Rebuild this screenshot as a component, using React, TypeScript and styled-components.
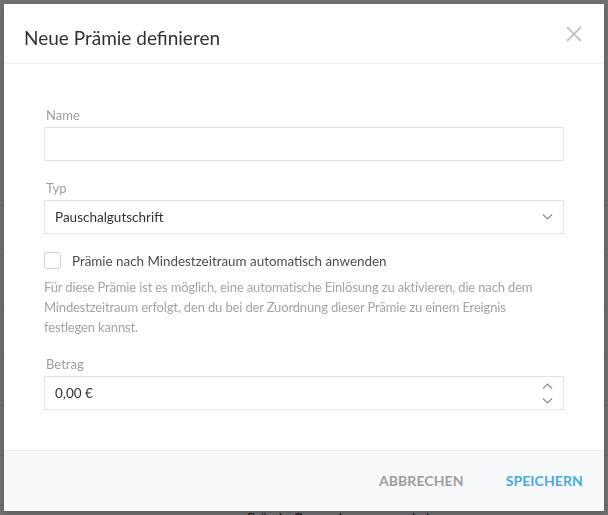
import React from 'react';
import styled, { createGlobalStyle } from 'styled-components';

const GlobalStyle = createGlobalStyle`
  html, body { margin: 0; padding: 0; width: 100%; height: 100%; overflow: hidden; }
  body { font-family: 'Lato', 'Noto Sans', sans-serif; background: #ffffff; color: #333; }
  * { box-sizing: border-box; }
`;

/* ---------- underlying page ---------- */
const Page = styled.div`
  width: 608px;
  height: 515px;
  padding-top: 205px;
  overflow: hidden;
`;

const TableRow = styled.div`
  height: 50px;
  border-top: 1px solid #e6e6e6;
  display: grid;
  grid-template-columns: 247px 165px 1fr;
  align-items: start;
  padding-top: 3px;
  font-size: 14px;
  color: #333;
`;

const Cell = styled.div`
  line-height: 18px;
`;

/* ---------- modal ---------- */
const Overlay = styled.div`
  position: fixed;
  inset: 0;
  background: rgba(8, 9, 14, 0.57);
  display: flex;
  align-items: flex-start;
  justify-content: center;
  padding: 4px;
`;

const Modal = styled.div`
  width: 600px;
  height: 507px;
  background: #fff;
  display: flex;
  flex-direction: column;
  box-shadow: 0 2px 8px rgba(0, 0, 0, 0.25);
`;

const Header = styled.div`
  display: flex;
  align-items: flex-start;
  justify-content: space-between;
  padding: 24px 22px 15px 20px;
  border-bottom: 1px solid #ececec;
`;

const Title = styled.h2`
  margin: 0;
  font-size: 19px;
  line-height: 20px;
  font-weight: 400;
  color: #2e3136;
`;

const CloseButton = styled.button`
  border: 0;
  background: none;
  padding: 0;
  margin-top: -2px;
  width: 16px;
  height: 16px;
  display: flex;
  cursor: pointer;
`;

const Body = styled.div`
  flex: 1;
  padding: 43px 40px 0;
  display: flex;
  flex-direction: column;
`;

const Field = styled.div<{ $mb?: number }>`
  display: flex;
  flex-direction: column;
  margin-bottom: ${(p) => p.$mb ?? 19}px;
`;

const Label = styled.label`
  font-size: 13px;
  line-height: 16px;
  color: #9c9c9c;
  margin: 0 0 4px 2px;
`;

const Box = styled.div`
  height: 34px;
  border: 1px solid #e4e4e4;
  display: flex;
  align-items: center;
  justify-content: space-between;
  padding: 0 10px 0 10px;
  font-size: 13.5px;
  color: #333;
`;

const Value = styled.span`
  line-height: 16px;
`;

const Spinner = styled.div`
  display: flex;
  flex-direction: column;
  gap: 9px;
`;

const CheckRow = styled.label`
  display: flex;
  align-items: center;
  gap: 11px;
  margin-bottom: 8px;
  font-size: 13.4px;
  color: #4a4d52;
`;

const CheckBox = styled.span`
  width: 17px;
  height: 17px;
  border: 1px solid #cfcfcf;
  border-radius: 3px;
  background: #fff;
  flex: none;
`;

const Helper = styled.p`
  margin: 0 0 19px;
  font-size: 13px;
  line-height: 20px;
  color: #a3a3a3;
  letter-spacing: -0.15px;
  white-space: nowrap;
`;

const Footer = styled.div`
  height: 61px;
  background: #f7f8fa;
  border-top: 1px solid #eceef0;
  display: flex;
  align-items: center;
  justify-content: flex-end;
  gap: 42px;
  padding: 0 21px 1px 0;
`;

const TextButton = styled.button<{ $primary?: boolean }>`
  border: 0;
  background: none;
  padding: 0;
  font-family: inherit;
  font-size: 14px;
  font-weight: 700;
  text-transform: uppercase;
  letter-spacing: 0.1px;
  color: ${(p) => (p.$primary ? '#4aa9e1' : '#9d9d9f')};
  cursor: pointer;
`;

const Chevron = ({ up = false }: { up?: boolean }) => (
  <svg width="11" height="6" viewBox="0 0 11 6" fill="none">
    <polyline
      points={up ? '1,5.5 5.5,1 10,5.5' : '1,0.5 5.5,5 10,0.5'}
      stroke="#8c8c8c"
      strokeWidth="1.2"
    />
  </svg>
);

export default function App() {
  return (
    <>
      <GlobalStyle />
      <Page>
        <TableRow><Cell /><Cell /><Cell /></TableRow>
        <TableRow><Cell /><Cell /><Cell /></TableRow>
        <TableRow><Cell /><Cell /><Cell /></TableRow>
        <TableRow><Cell /><Cell /><Cell /></TableRow>
        <TableRow><Cell /><Cell /><Cell /></TableRow>
        <TableRow><Cell /><Cell /><Cell /></TableRow>
        <TableRow>
          <Cell />
          <Cell>Prämie Gewordener</Cell>
          <Cell>keine</Cell>
        </TableRow>
      </Page>
      <Overlay>
        <Modal>
          <Header>
            <Title>Neue Prämie definieren</Title>
            <CloseButton aria-label="Schließen">
              <svg width="16" height="16" viewBox="0 0 16 16">
                <path d="M1 1 L15 15 M15 1 L1 15" stroke="#c6c6c6" strokeWidth="2" />
              </svg>
            </CloseButton>
          </Header>
          <Body>
            <Field>
              <Label>Name</Label>
              <Box />
            </Field>
            <Field $mb={18}>
              <Label>Typ</Label>
              <Box>
                <Value>Pauschalgutschrift</Value>
                <Chevron />
              </Box>
            </Field>
            <CheckRow>
              <CheckBox />
              Prämie nach Mindestzeitraum automatisch anwenden
            </CheckRow>
            <Helper>
              Für diese Prämie ist es möglich, eine automatische Einlösung zu aktivieren, die nach dem
              <br />
              Mindestzeitraum erfolgt, den du bei der Zuordnung dieser Prämie zu einem Ereignis
              <br />
              festlegen kannst.
            </Helper>
            <Field>
              <Label>Betrag</Label>
              <Box>
                <Value>0,00 €</Value>
                <Spinner>
                  <Chevron up />
                  <Chevron />
                </Spinner>
              </Box>
            </Field>
          </Body>
          <Footer>
            <TextButton>Abbrechen</TextButton>
            <TextButton $primary>Speichern</TextButton>
          </Footer>
        </Modal>
      </Overlay>
    </>
  );
}
